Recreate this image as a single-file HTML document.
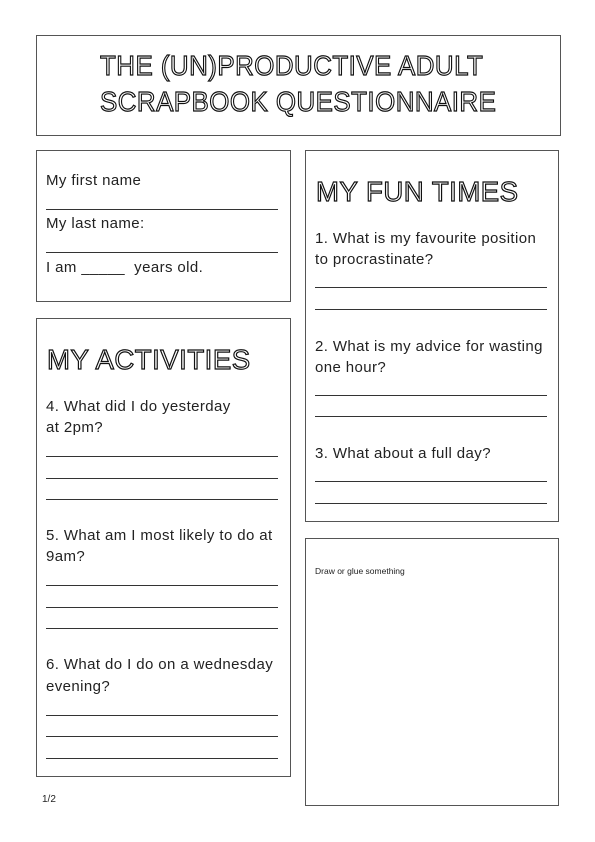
<!DOCTYPE html>
<html><head><meta charset="utf-8"><style>
html,body{margin:0;padding:0;background:#fff;}
body{width:595px;height:842px;position:relative;overflow:hidden;font-family:"Liberation Sans",sans-serif;color:#222;}
.box{position:absolute;border:1px solid #555;box-sizing:border-box;}
.t{position:absolute;font-size:15px;letter-spacing:0.4px;line-height:20px;white-space:nowrap;}
.l{position:absolute;height:0;border-top:1px solid #333;}
.h{position:absolute;font-weight:normal;color:#fff;-webkit-text-stroke:1.2px #111;white-space:nowrap;transform-origin:0 0;line-height:1;letter-spacing:0.5px;}
</style></head><body>
<div class="box" style="left:36px;top:35px;width:525px;height:101px"></div>
<div class="h" style="left:100px;top:52px;font-size:28px;transform:scaleX(0.925)">THE (UN)PRODUCTIVE ADULT</div>
<div class="h" style="left:100px;top:88px;font-size:28px;transform:scaleX(0.925)">SCRAPBOOK QUESTIONNAIRE</div>

<div class="box" style="left:36px;top:150px;width:255px;height:152px"></div>
<div class="t" style="left:46px;top:171px">My first name</div>
<div class="l" style="left:46px;top:209px;width:232px"></div>
<div class="t" style="left:46px;top:214px">My last name:</div>
<div class="l" style="left:46px;top:252px;width:232px"></div>
<div class="t" style="left:46px;top:258px">I am _____&nbsp; years old.</div>

<div class="box" style="left:36px;top:318px;width:255px;height:459px"></div>
<div class="h" style="left:47px;top:346px;font-size:28px;transform:scaleX(0.985)">MY ACTIVITIES</div>
<div class="t" style="left:46px;top:397px">4. What did I do yesterday</div>
<div class="t" style="left:46px;top:418px">at 2pm?</div>
<div class="l" style="left:46px;top:456px;width:232px"></div>
<div class="l" style="left:46px;top:478px;width:232px"></div>
<div class="l" style="left:46px;top:499px;width:232px"></div>
<div class="t" style="left:46px;top:526px">5. What am I most likely to do at</div>
<div class="t" style="left:46px;top:547px">9am?</div>
<div class="l" style="left:46px;top:585px;width:232px"></div>
<div class="l" style="left:46px;top:607px;width:232px"></div>
<div class="l" style="left:46px;top:628px;width:232px"></div>
<div class="t" style="left:46px;top:655px">6. What do I do on a wednesday</div>
<div class="t" style="left:46px;top:677px">evening?</div>
<div class="l" style="left:46px;top:715px;width:232px"></div>
<div class="l" style="left:46px;top:736px;width:232px"></div>
<div class="l" style="left:46px;top:758px;width:232px"></div>

<div class="box" style="left:305px;top:150px;width:254px;height:372px"></div>
<div class="h" style="left:316px;top:178px;font-size:28px;transform:scaleX(0.985)">MY FUN TIMES</div>
<div class="t" style="left:315px;top:229px">1. What is my favourite position</div>
<div class="t" style="left:315px;top:250px">to procrastinate?</div>
<div class="l" style="left:315px;top:287px;width:232px"></div>
<div class="l" style="left:315px;top:309px;width:232px"></div>
<div class="t" style="left:315px;top:337px">2. What is my advice for wasting</div>
<div class="t" style="left:315px;top:358px">one hour?</div>
<div class="l" style="left:315px;top:395px;width:232px"></div>
<div class="l" style="left:315px;top:416px;width:232px"></div>
<div class="t" style="left:315px;top:444px">3. What about a full day?</div>
<div class="l" style="left:315px;top:481px;width:232px"></div>
<div class="l" style="left:315px;top:503px;width:232px"></div>

<div class="box" style="left:305px;top:538px;width:254px;height:268px"></div>
<div class="t" style="left:315px;top:561px;font-size:8.5px;letter-spacing:0">Draw or glue something</div>

<div class="t" style="left:42px;top:790px;font-size:10px;letter-spacing:0">1/2</div>
</body></html>
